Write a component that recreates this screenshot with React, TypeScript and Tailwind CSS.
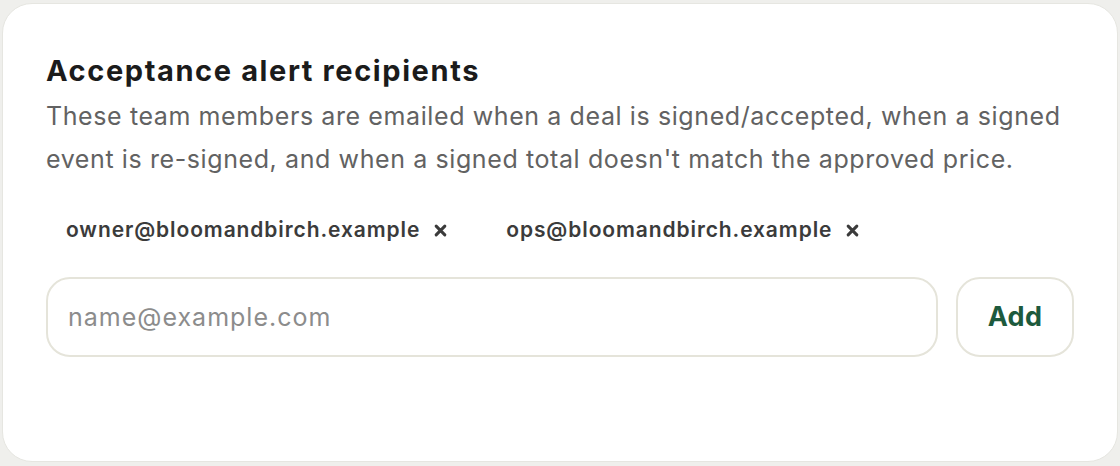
import React from 'react';

export default function App() {
  const recipients = ['owner@bloomandbirch.example', 'ops@bloomandbirch.example'];

  return (
    <div className="w-[1120px] h-[466px] bg-[#efefec] pt-[3px] pb-[4px] px-[2px] font-['Inter',sans-serif]">
      <div className="h-full bg-white rounded-[30px] border border-[#e6e6e1] px-[43px] pt-[49px]">
        {/* Header */}
        <h2 className="text-[29px] leading-[36px] font-bold text-[#1b1b1b] tracking-[1.6px]">
          Acceptance alert recipients
        </h2>
        <p className="mt-[6px] text-[25px] leading-[43px] text-[#626262] tracking-[0.6px]">
          These team members are emailed when a deal is signed/accepted, when a signed event is re-signed, and when a signed total doesn't match the approved price.
        </p>

        {/* Recipient chips */}
        <div className="flex items-center gap-[19px] mt-[29px]">
          {recipients.map((email) => (
            <div key={email} className="flex items-center gap-[14px] px-[20px] h-[40px] rounded-full">
              <span className="text-[21px] font-semibold text-[#3b3b3b] tracking-[0.9px]">{email}</span>
              <button className="text-[#3b3b3b] flex items-center">
                <svg width="13" height="13" viewBox="0 0 12 12">
                  <path d="M2 2 L10 10 M10 2 L2 10" stroke="currentColor" strokeWidth="2.8" strokeLinecap="round" />
                </svg>
              </button>
            </div>
          ))}
        </div>

        {/* Add row */}
        <div className="flex items-center gap-[18px] mt-[27px]">
          <input
            placeholder="name@example.com"
            className="flex-1 h-[80px] rounded-[24px] border-2 border-[#e5e4da] px-[20px] text-[25px] tracking-[1px] text-[#222] placeholder:text-[#8c8c8c] outline-none"
          />
          <button className="h-[80px] w-[118px] rounded-[24px] border-2 border-[#e5e4da] text-[27px] font-bold tracking-[0.3px] text-[#1d5a3d]">
            Add
          </button>
        </div>
      </div>
    </div>
  );
}
